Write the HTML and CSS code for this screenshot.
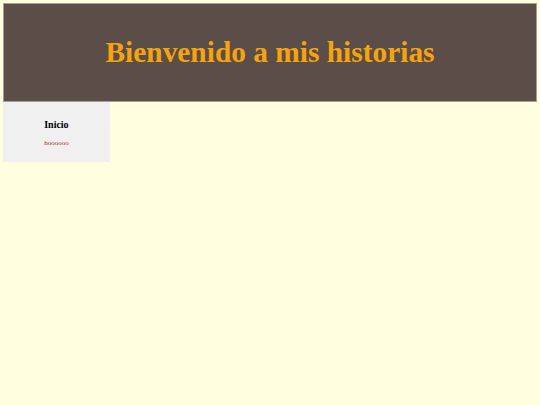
FILE: index.html
```html
<!DOCTYPE html>
<html lang="es">
<head>
<meta charset="utf-8">
<title>Mis historias</title>
<link rel="stylesheet" href="styles.css">
</head>
<body class="page">
  <header class="banner">
    <h1 class="banner-title">Bienvenido a mis historias</h1>
  </header>
  <div class="layout">
    <nav class="sidebar">
      <div class="nav-title">Inicio</div>
      <div class="nav-link">hoooooo</div>
    </nav>
  </div>
</body>
</html>
```

FILE: styles.css
```css
html, body {
  margin: 0;
  padding: 0;
}
.page {
  background: #ffffe0;
  padding: 3px;
  min-height: 405px;
  box-sizing: border-box;
  font-family: "Liberation Serif", "Times New Roman", serif;
}
.banner {
  box-sizing: border-box;
  height: 99px;
  background: #5b4e48;
  border: 1px solid #a89f94;
  display: flex;
  align-items: center;
  justify-content: center;
}
.banner-title {
  margin: 0;
  font-size: 29.4px;
  font-weight: bold;
  color: #f6a30e;
}
.layout {
  display: flex;
}
.sidebar {
  width: 20%;
  background: #f0f0f0;
  box-sizing: border-box;
  padding: 17px 0 15px;
  text-align: center;
}
.nav-title {
  font-size: 10px;
  font-weight: bold;
  color: #000;
}
.nav-link {
  margin-top: 9px;
  font-size: 7px;
  color: #a52a2a;
}
```
